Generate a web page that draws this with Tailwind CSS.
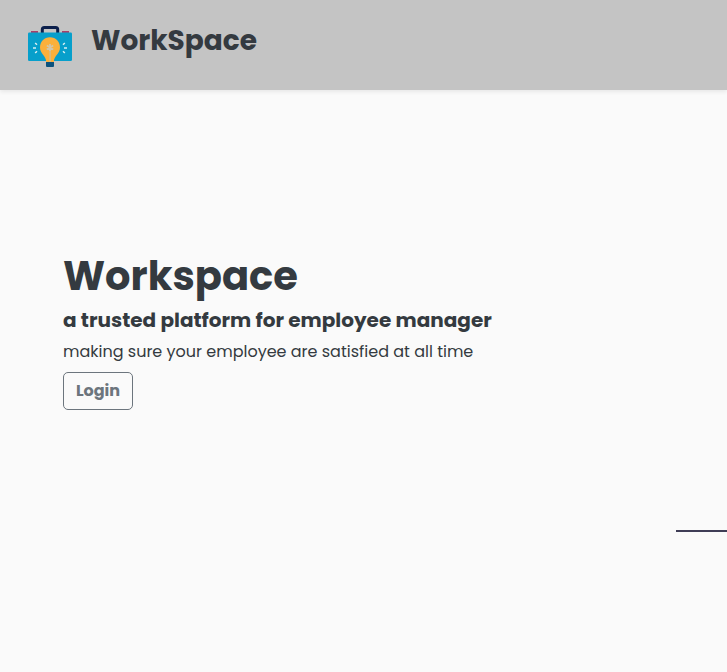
<!DOCTYPE html>
<html lang="en">
<head>
<meta charset="utf-8">
<title>WorkSpace</title>
<script src="https://cdn.jsdelivr.net/npm/@tailwindcss/browser@4"></script>
</head>
<body class="flex h-screen flex-col overflow-hidden bg-[#fafafa] font-[Poppins,Inter,sans-serif] text-[#343a40]">
<header class="flex h-[90px] shrink-0 items-start bg-[#c4c4c4] pl-[28px] shadow-[0_2px_4px_rgba(0,0,0,0.075)]">
  <svg class="mt-[25px] h-[43px] w-[44px] shrink-0" viewBox="0 0 44 43" fill="none">
    <path d="M14.3 8V4.5Q14.3 2.5 16.3 2.5H27.7Q29.7 2.5 29.7 4.5V8" stroke="#0b1f4b" stroke-width="3"/>
    <path d="M3 6H10V9H3ZM34 6H41V9H34Z" fill="#a94068"/>
    <rect y="7.5" width="44" height="28.5" rx="1.2" fill="#079fcb"/>
    <path d="M22 12.3C16 12.3 12 16.8 12 22.5C12 29 18.2 30.5 18.2 37H25.8C25.8 30.5 32 29 32 22.5C32 16.8 28 12.3 22 12.3Z" fill="#fbb03b"/>
    <path d="M21.3 24H22.9V37H21.3Z" fill="#d6bd85"/>
    <path d="M22 19V26M18.8 20.5L25.2 24.5M25.2 20.5L18.8 24.5" stroke="#d2c6aa" stroke-width="1.8"/>
    <path d="M18 37H26V41Q26 42 25 42H19Q18 42 18 41Z" fill="#0b527e"/>
    <path d="M7.2 18L9 19.8M5 23H8M7.2 28L9 26.2M36.8 18L35 19.8M39 23H36M36.8 28L35 26.2" stroke="#d8eef2" stroke-width="1.5"/>
  </svg>
  <span class="ml-[19px] mt-[20px] whitespace-nowrap text-[28px] font-bold leading-[42px]">WorkSpace</span>
</header>
<main class="flex flex-1 flex-col items-start pl-[63px] pt-[162px]">
  <h1 class="whitespace-nowrap text-[40px] font-bold leading-[48px]">Workspace</h1>
  <h2 class="mt-[8px] whitespace-nowrap text-[20px] font-bold leading-[24px]">a trusted platform for employee manager</h2>
  <p class="mt-[8px] whitespace-nowrap text-[16px] leading-[24px]">making sure your employee are satisfied at all time</p>
  <button class="mt-[8px] h-[38px] w-[70px] rounded-[5px] border border-[#6c757d] text-[16px] font-bold text-[#6c757d]">Login</button>
  <div class="mt-[120px] h-[2px] w-[51px] self-end bg-[#3f3d56]"></div>
</main>
</body>
</html>
